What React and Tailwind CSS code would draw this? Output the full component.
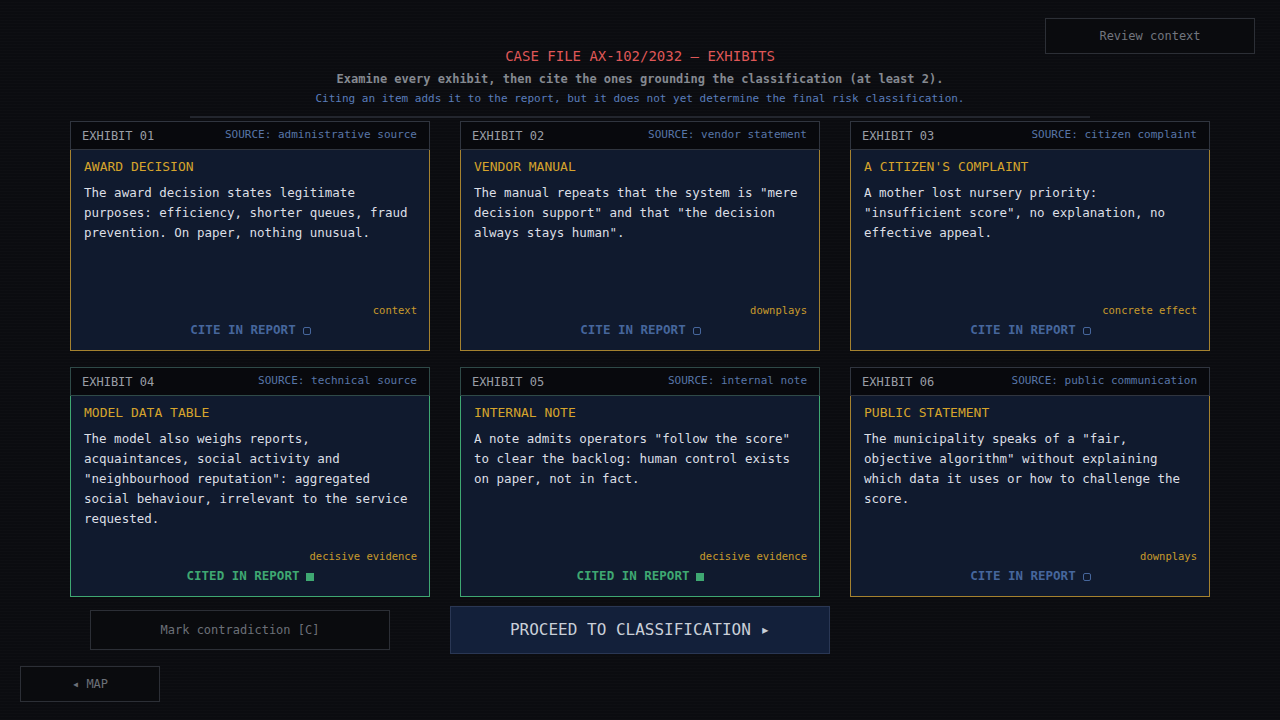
import React from "react";

const exhibits = [
  {
    n: "01",
    source: "administrative source",
    title: "AWARD DECISION",
    text: "The award decision states legitimate purposes: efficiency, shorter queues, fraud prevention. On paper, nothing unusual.",
    tag: "context",
    cited: false,
  },
  {
    n: "02",
    source: "vendor statement",
    title: "VENDOR MANUAL",
    text: 'The manual repeats that the system is "mere decision support" and that "the decision always stays human".',
    tag: "downplays",
    cited: false,
  },
  {
    n: "03",
    source: "citizen complaint",
    title: "A CITIZEN'S COMPLAINT",
    text: 'A mother lost nursery priority: "insufficient score", no explanation, no effective appeal.',
    tag: "concrete effect",
    cited: false,
  },
  {
    n: "04",
    source: "technical source",
    title: "MODEL DATA TABLE",
    text: 'The model also weighs reports, acquaintances, social activity and "neighbourhood reputation": aggregated social behaviour, irrelevant to the service requested.',
    tag: "decisive evidence",
    cited: true,
  },
  {
    n: "05",
    source: "internal note",
    title: "INTERNAL NOTE",
    text: 'A note admits operators "follow the score" to clear the backlog: human control exists on paper, not in fact.',
    tag: "decisive evidence",
    cited: true,
  },
  {
    n: "06",
    source: "public communication",
    title: "PUBLIC STATEMENT",
    text: 'The municipality speaks of a "fair, objective algorithm" without explaining which data it uses or how to challenge the score.',
    tag: "downplays",
    cited: false,
  },
];

function Card({ e }) {
  return (
    <div className="flex flex-col h-[230px]">
      <div
        className={
          "flex items-center justify-between h-[29px] pl-[11px] pr-[12px] bg-[#08090d] border " +
          (e.cited ? "border-[#2f4a48]" : "border-[#30353f]")
        }
      >
        <span className="text-[12px] text-[#9a9ea6]">EXHIBIT {e.n}</span>
        <span className="text-[11px] text-[#5876a8]">SOURCE: {e.source}</span>
      </div>
      <div
        className={
          "flex-1 flex flex-col bg-[#101a2e] border border-t-0 pl-[13px] pr-[12px] pt-[8px] pb-[11px] " +
          (e.cited ? "border-[#3fa872]" : "border-[#a5822f]")
        }
      >
        <div className="text-[13px] leading-[18px] text-[#d6a42c]">{e.title}</div>
        <p className="mt-[7px] text-[12.5px] leading-[20px] text-[#dcdfe5] whitespace-normal">{e.text}</p>
        <div className="mt-auto text-right text-[10.5px] leading-[14px] text-[#c99a2c]">{e.tag}</div>
        <div
          className={
            "mt-[4px] flex items-center justify-center gap-[7px] text-[12.5px] leading-[18px] font-bold " +
            (e.cited ? "text-[#3fa872]" : "text-[#46669c]")
          }
        >
          <span>{e.cited ? "CITED IN REPORT" : "CITE IN REPORT"}</span>
          {e.cited ? (
            <span className="inline-flex items-center justify-center w-[8px] h-[8px] border border-[#3fa872] mt-[2px]">
              <span className="w-[6px] h-[6px] bg-[#3fa872]" />
            </span>
          ) : (
            <span className="inline-block w-[8px] h-[8px] border border-[#46669c] rounded-[2px] mt-[2px]" />
          )}
        </div>
      </div>
    </div>
  );
}

export default function App() {
  return (
    <div
      className="relative w-[1280px] h-[720px] overflow-hidden bg-[#0b0c10] bg-[repeating-linear-gradient(0deg,rgba(255,255,255,0.012)_0px,rgba(255,255,255,0.012)_1px,transparent_1px,transparent_3px)]"
      style={{ fontFamily: '"DejaVu Sans Mono", "Liberation Mono", monospace' }}
    >
      <button className="absolute top-[18px] left-[1045px] w-[210px] h-[36px] border border-[#2c2f36] bg-[#0a0b0e] text-[12px] text-[#72767e]">
        Review context
      </button>

      <div className="flex flex-col items-center pt-[46px]">
        <div className="text-[14px] leading-[20px] text-[#df5757]">CASE FILE AX-102/2032 — EXHIBITS</div>
        <div className="mt-[3px] text-[12px] leading-[20px] font-bold text-[#858990]">
          Examine every exhibit, then cite the ones grounding the classification (at least 2).
        </div>
        <div className="mt-[2px] text-[11px] leading-[16px] text-[#5a7dbb]">
          Citing an item adds it to the report, but it does not yet determine the final risk classification.
        </div>
        <div className="mt-[9px] w-[900px] h-[2px] bg-[#23262e]" />

        <div className="mt-[3px] grid grid-cols-[360px_360px_360px] gap-x-[30px] gap-y-[16px]">
          {exhibits.map((e) => (
            <Card key={e.n} e={e} />
          ))}
        </div>

        <div className="mt-[9px] grid grid-cols-[360px_360px_360px] gap-x-[30px] items-center">
          <button className="ml-[20px] w-[300px] h-[40px] border border-[#2c2f36] bg-[#0a0b0e] text-[12px] text-[#6c7078]">
            Mark contradiction [C]
          </button>
          <button className="-ml-[10px] w-[380px] h-[48px] border border-[#2a3754] bg-[#13203a] text-[16px] text-[#c9cfd8]">
            PROCEED TO CLASSIFICATION ▸
          </button>
        </div>
      </div>

      <button className="absolute top-[666px] left-[20px] w-[140px] h-[36px] border border-[#2c2f36] bg-[#0a0b0e] text-[12px] text-[#6c7078]">
        ◂ MAP
      </button>
    </div>
  );
}
